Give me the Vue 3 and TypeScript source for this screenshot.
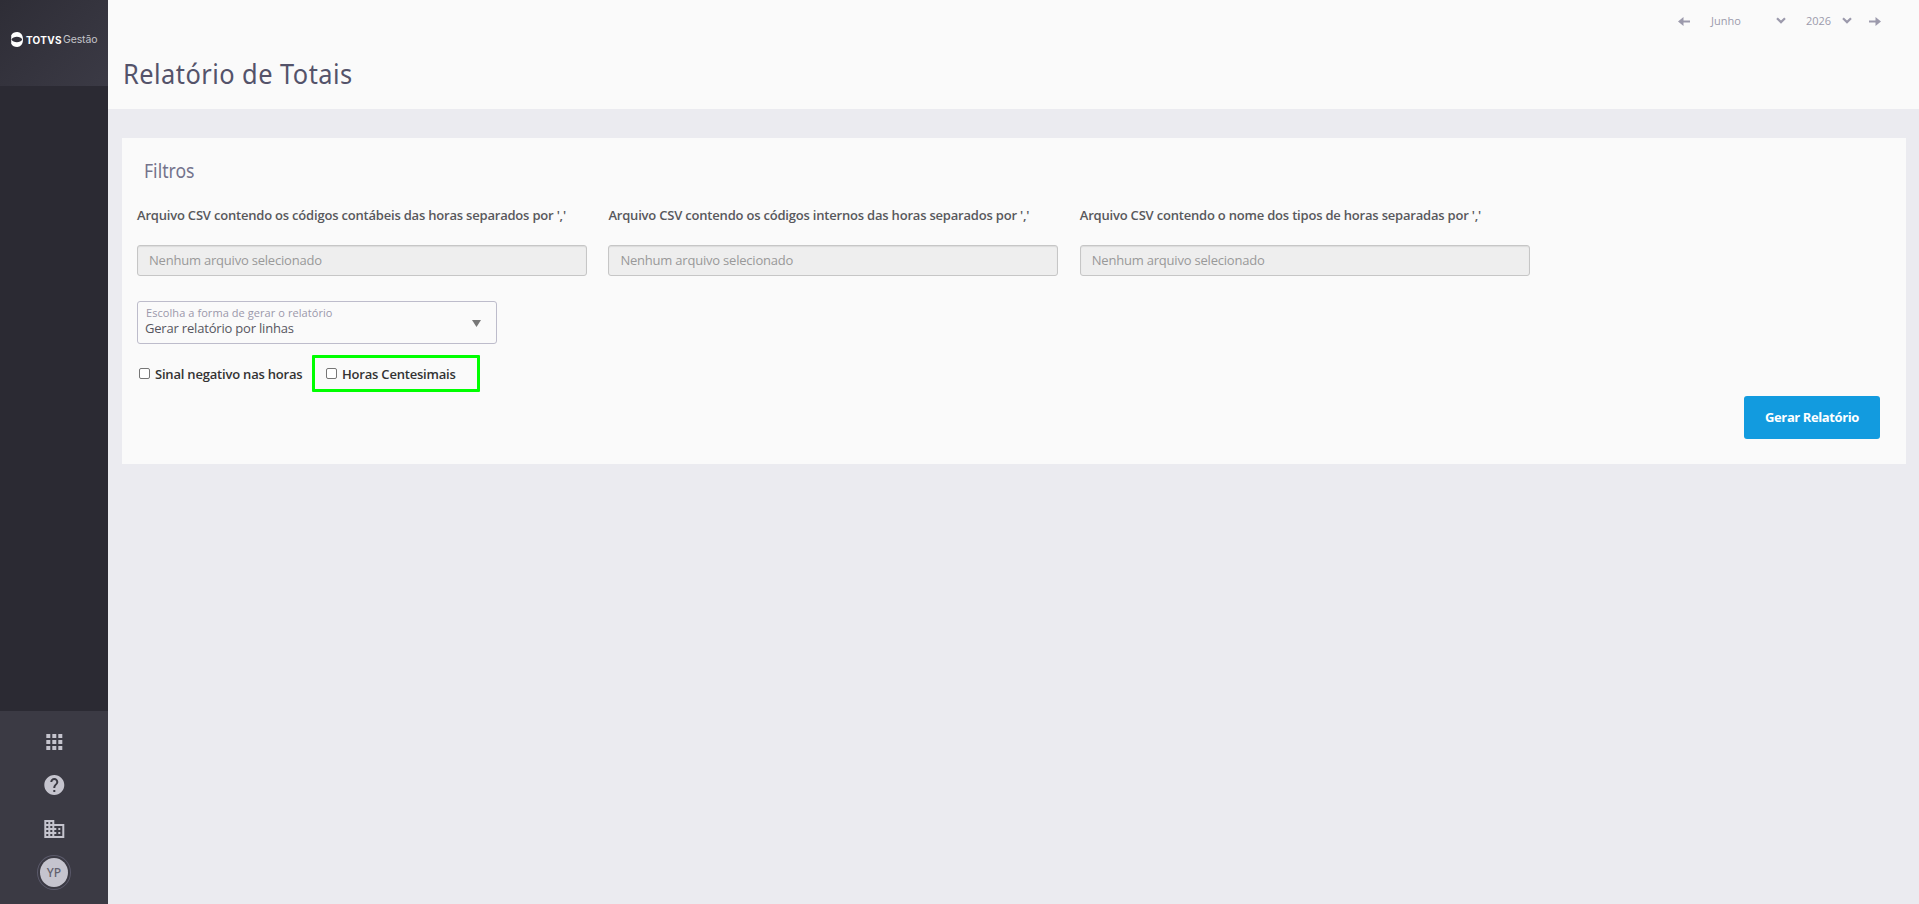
<script setup lang="ts">
import { ref } from 'vue'

interface FileField {
  id: string
  label: string
}

const fields: FileField[] = [
  { id: 'contabeis', label: "Arquivo CSV contendo os códigos contábeis das horas separados por ','" },
  { id: 'internos', label: "Arquivo CSV contendo os códigos internos das horas separados por ','" },
  { id: 'nomes', label: "Arquivo CSV contendo o nome dos tipos de horas separadas por ','" },
]
const negativeSign = ref(false)
const centesimal = ref(false)
</script>

<template>
  <div class="app">
    <aside class="sidebar">
      <div class="brand">
        <svg class="brand-mark" viewBox="0 0 13 15" width="13" height="15">
          <path fill="#fff" fill-rule="evenodd" d="M6.200 0C9.500 0 12 2.800 12 7.500S9.500 15 6.200 15C3.400 15 1.500 14 .2 11.700V3.300C1.500 1 3.400 0 6.200 0ZM.5 7.500C2 11.200 9.800 11.200 11.200 7.500C9.800 3.800 2 3.800 .5 7.500Z" />
        </svg>
        <span class="brand-name">TOTVS</span>
        <span class="brand-product">Gestão</span>
      </div>
      <nav class="tools">
        <svg class="icon" viewBox="0 0 24 24"><path d="M4 8h4V4H4v4zm6 12h4v-4h-4v4zm-6 0h4v-4H4v4zm0-6h4v-4H4v4zm6 0h4v-4h-4v4zm6-10v4h4V4h-4zm-6 4h4V4h-4v4zm6 6h4v-4h-4v4zm0 6h4v-4h-4v4z" /></svg>
        <svg class="icon" viewBox="0 0 24 24"><path d="M12 2C6.480 2 2 6.480 2 12s4.480 10 10 10 10-4.480 10-10S17.520 2 12 2zm1 17h-2v-2h2v2zm2.070-7.750l-.9.920C13.450 12.900 13 13.500 13 15h-2v-.5c0-1.100.45-2.100 1.170-2.830l1.240-1.260c.37-.36.59-.86.59-1.410 0-1.100-.9-2-2-2s-2 .9-2 2H8c0-2.210 1.790-4 4-4s4 1.790 4 4c0 .88-.36 1.680-.93 2.250z" /></svg>
        <svg class="icon" viewBox="0 0 24 24"><path d="M12 7V3H2v18h20V7H12zM6 19H4v-2h2v2zm0-4H4v-2h2v2zm0-4H4V9h2v2zm0-4H4V5h2v2zm4 12H8v-2h2v2zm0-4H8v-2h2v2zm0-4H8V9h2v2zm0-4H8V5h2v2zm10 12h-8v-2h2v-2h-2v-2h2v-2h-2V9h8v10zm-2-8h-2v2h2v-2zm0 4h-2v2h2v-2z" /></svg>
        <div class="avatar"><span>YP</span></div>
      </nav>
    </aside>

    <main class="main">
      <header class="header">
        <div class="period">
          <svg class="arrow" width="12" height="9" viewBox="0 0 12 9"><path d="M0 4.500 5.500 0V3.400H12V5.600H5.500V9Z" /></svg>
          <div class="period-select month"><span>Junho</span><svg width="10" height="7" viewBox="0 0 10 7"><path d="M1 1.200 5 5.100 9 1.200" /></svg></div>
          <div class="period-select year"><span>2026</span><svg width="10" height="7" viewBox="0 0 10 7"><path d="M1 1.200 5 5.100 9 1.200" /></svg></div>
          <svg class="arrow" width="12" height="9" viewBox="0 0 12 9"><path d="M12 4.500 6.500 0V3.400H0V5.600H6.500V9Z" /></svg>
        </div>
        <h1>Relatório de Totais</h1>
      </header>

      <section class="card">
        <h2>Filtros</h2>
        <div class="fields">
          <div v-for="field in fields" :key="field.id" class="field">
            <label :for="field.id">{{ field.label }}</label>
            <input :id="field.id" type="text" placeholder="Nenhum arquivo selecionado" disabled />
          </div>
        </div>
        <div class="select">
          <div class="select-text">
            <span class="select-label">Escolha a forma de gerar o relatório</span>
            <span class="select-value">Gerar relatório por linhas</span>
          </div>
          <svg width="9" height="7" viewBox="0 0 9 7"><path fill="#777" d="M0 0H9L4.500 7Z" /></svg>
        </div>
        <div class="checks">
          <label class="check"><input v-model="negativeSign" type="checkbox" /><span>Sinal negativo nas horas</span></label>
          <label class="check highlighted"><input v-model="centesimal" type="checkbox" /><span>Horas Centesimais</span></label>
        </div>
        <button class="submit" type="button">Gerar Relatório</button>
      </section>
    </main>
  </div>
</template>

<style>
body { margin: 0; overflow: hidden; }
</style>

<style scoped>
.app {
  display: flex;
  height: 904px;
  background: #ebebf0;
  font-family: "Open Sans", "Noto Sans", sans-serif;
  font-size: 13px;
}
.app * { box-sizing: border-box; }
.sidebar {
  display: flex;
  flex-direction: column;
  justify-content: space-between;
  flex: none;
  width: 108px;
  background: #2b2a33;
}
.brand {
  display: flex;
  align-items: center;
  height: 86px;
  padding: 0 0 7px 11px;
  background: linear-gradient(135deg, #2e2d36, #3b3a45);
  white-space: nowrap;
  color: #fff;
  font-family: Inter, sans-serif;
  line-height: 12px;
}
.brand-mark { flex: none; margin-right: 2px; }
.brand-name { width: 37px; font-size: 10px; font-weight: 700; letter-spacing: .25px; }
.brand-product { font-size: 10.500px; color: #c4c4ca; letter-spacing: -.15px; }
.tools {
  display: flex;
  flex-direction: column;
  align-items: center;
  height: 193px;
  padding-top: 19px;
  background: #3b3a44;
}
.icon { flex: none; width: 24px; height: 24px; margin: 0 0 19.300px; fill: #c5c4ce; transform: translateX(.3px); }
.avatar {
  display: flex;
  flex: none;
  width: 34px;
  height: 35px;
  margin-top: -5px;
  padding: 2px;
  border: 1px solid #5a596a;
  border-radius: 50%;
}
.avatar span {
  flex: 1;
  border-radius: 50%;
  background: #c5c4ce;
  color: #62616e;
  font: 500 12px/29px "Noto Sans", sans-serif;
  text-align: center;
}
.main { flex: 1; min-width: 0; }
.header { height: 109px; padding: 13px 38px 0 15px; background: #fafafa; }
.period {
  display: flex;
  align-items: center;
  justify-content: flex-end;
  height: 16px;
  color: #9c9aac;
  font-size: 11px;
  line-height: 16px;
}
.arrow { fill: #9c9aac; }
.period-select { display: flex; align-items: center; justify-content: space-between; }
.period-select svg { margin-bottom: 2px; fill: none; stroke: #9c9aac; stroke-width: 2.200; }
.month { width: 75px; margin-left: 21px; }
.year { width: 46px; margin: 0 17px 0 20px; }
h1 {
  width: max-content;
  margin: 25px 0 0;
  color: #54536a;
  font: 400 27px/40px "Noto Sans", sans-serif;
  letter-spacing: .5px;
  transform: scaleX(.94);
  transform-origin: left;
}
.card {
  display: flex;
  flex-direction: column;
  height: 326px;
  margin: 29px 13px 0 14px;
  padding: 18px 26px 0 15px;
  background: #fafafa;
}
h2 {
  width: max-content;
  margin: 0 0 0 7px;
  color: #74738c;
  font: 400 19px/30px "Noto Sans", sans-serif;
  transform: scaleX(.925);
  transform-origin: left;
}
.fields { display: flex; gap: 21.400px; margin-top: 19px; }
.field { display: flex; flex-direction: column; flex: none; width: 450px; }
.field label { color: #58585c; font-weight: 600; line-height: 20px; letter-spacing: -.2px; white-space: nowrap; }
.field input {
  height: 31px;
  margin: 20px 0 0;
  padding: 0 11px 1px;
  border: 1px solid #c6c6c6;
  border-radius: 3px;
  background: #eee;
  box-shadow: inset 0 1px 1px rgba(0, 0, 0, .08);
  font: 13px "Open Sans", sans-serif;
  letter-spacing: -.21px;
}
.field input::placeholder { color: #999; opacity: 1; }
.select {
  display: flex;
  align-items: center;
  justify-content: space-between;
  width: 360px;
  height: 43px;
  margin-top: 25px;
  padding: 0 15px 0 7px;
  border: 1px solid #bdbccb;
  border-radius: 3px;
}
.select svg { margin-top: 2px; }
.select-text { display: flex; flex-direction: column; padding-bottom: 2px; }
.select-label { padding-left: 1px; color: #9a98aa; font-size: 11px; line-height: 14px; letter-spacing: .07px; }
.select-value { color: #57565f; line-height: 17px; letter-spacing: -.19px; }
.checks { display: flex; align-items: center; height: 37px; margin-top: 11px; }
.check {
  display: flex;
  align-items: center;
  width: 175px;
  height: 37px;
  padding-left: 2px;
  color: #333;
  font-weight: 600;
  letter-spacing: -.2px;
  white-space: nowrap;
}
.check input {
  flex: none;
  appearance: none;
  width: 11px;
  height: 11px;
  margin: 0 5px 1px 0;
  border: 1px solid #767676;
  border-radius: 2px;
  background: #fff;
}
.highlighted { width: 168px; padding-left: 11px; border: 3px solid #0f0; border-radius: 1px; }
.submit {
  align-self: flex-end;
  width: 136px;
  height: 43px;
  margin: 4px 0 0;
  padding: 0 0 1px;
  border: 0;
  border-radius: 3px;
  background: #129bdf;
  color: #fff;
  font: 700 13px "Open Sans", sans-serif;
  letter-spacing: -.4px;
}
</style>
